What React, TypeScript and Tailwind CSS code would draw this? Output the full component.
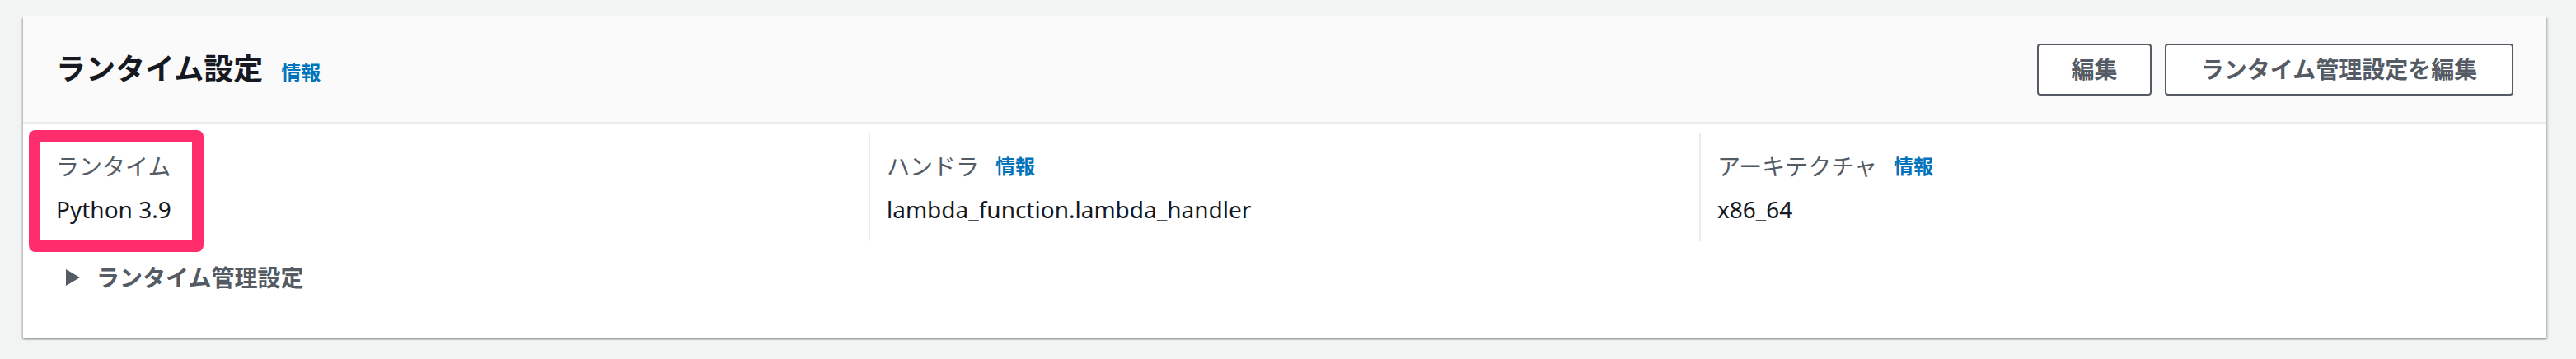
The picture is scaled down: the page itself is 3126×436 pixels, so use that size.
const font = { fontFamily: '"Noto Sans", "Noto Sans CJK JP", sans-serif' };

const InfoLink = () => (
  <a className="ml-[20px] text-[24px] font-bold text-[#0073bb] leading-none">情報</a>
);

const Field = ({
  label,
  value,
  info,
  first,
}: {
  label: string;
  value: string;
  info?: boolean;
  first?: boolean;
}) => (
  <div
    className={
      first
        ? 'relative pt-[18px] pb-[17px]'
        : 'relative pt-[18px] pb-[17px] pl-[20px] border-l-2 border-[#eaeded]'
    }
  >
    <div className="flex items-center h-[44px] text-[28px] leading-[44px] text-[#545b64]">
      <span>{label}</span>
      {info && <InfoLink />}
    </div>
    <div className="mt-[8px] h-[44px] text-[28px] leading-[44px] text-[#16191f]">{value}</div>
  </div>
);

export default function App() {
  return (
    <div className="w-[3126px] h-[436px] bg-[#f2f3f3] pt-[20px] pl-[28px]" style={font}>
      <div className="relative w-[3062px] h-[390px] bg-white shadow-[0_2px_2px_0_rgba(0,28,36,0.3),2px_2px_2px_0_rgba(0,28,36,0.15),-2px_2px_2px_0_rgba(0,28,36,0.15)]">
        {/* header */}
        <div className="flex items-center justify-between h-[130px] px-[40px] bg-[#fafafa] border-b-2 border-[#eaeded]">
          <div className="flex items-baseline">
            <h2 className="text-[36px] font-bold text-[#16191f] leading-none">ランタイム設定</h2>
            <a className="ml-[22px] text-[24px] font-bold text-[#0073bb] leading-none">情報</a>
          </div>
          <div className="flex gap-[16px]">
            <button className="w-[139px] h-[63px] rounded-[4px] border-2 border-[#545b64] bg-white text-[28px] font-bold text-[#545b64]">
              編集
            </button>
            <button className="w-[423px] h-[63px] rounded-[4px] border-2 border-[#545b64] bg-white text-[28px] font-bold text-[#545b64]">
              ランタイム管理設定を編集
            </button>
          </div>
        </div>

        {/* body */}
        <div className="px-[40px] pt-[12px]">
          <div className="grid grid-cols-[986px_1008px_1fr]">
            <Field label="ランタイム" value="Python 3.9" first />
            <Field label="ハンドラ" value="lambda_function.lambda_handler" info />
            <Field label="アーキテクチャ" value="x86_64" info />
          </div>
          <div className="mt-[22px] flex items-center h-[44px] pl-[12px] text-[28px] font-bold text-[#545b64] leading-[44px]">
            <svg width="17" height="20" viewBox="0 0 17 20" className="mr-[20px]">
              <path d="M0 0 L17 10 L0 20 Z" fill="#545b64" />
            </svg>
            <span>ランタイム管理設定</span>
          </div>
        </div>

        {/* highlight annotation */}
        <div className="absolute left-[7px] top-[138px] w-[212px] h-[148px] border-[14px] border-[#ff2d6b] rounded-[8px] pointer-events-none" />
      </div>
    </div>
  );
}
